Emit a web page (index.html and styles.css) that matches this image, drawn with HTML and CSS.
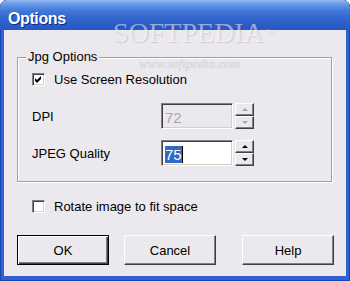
FILE: index.html
```html
<!DOCTYPE html>
<html lang="en">
<head>
    <meta charset="UTF-8">
    <title>Options</title>
    <link rel="stylesheet" href="styles.css">
</head>
<body>
    <div class="window">
        <div class="titlebar">Options</div>
        <div class="client">
            <fieldset class="group">
                <legend>Jpg Options</legend>
                <label class="check-row">
                    <span class="check">
                        <svg width="7" height="7" viewBox="0 0 7 7"><path d="M0 2 L2 4 L6 0 L6 3 L2 7 L0 5 Z" fill="#000"/></svg>
                    </span>
                    Use Screen Resolution
                </label>
                <div class="field-row dpi">
                    <span class="field-label">DPI</span>
                    <div class="edit disabled">72</div>
                    <div class="spin disabled">
                        <span class="spin-btn"><i class="arrow up"></i></span>
                        <span class="spin-btn"><i class="arrow down"></i></span>
                    </div>
                </div>
                <div class="field-row quality">
                    <span class="field-label">JPEG Quality</span>
                    <div class="edit"><span class="selected">75</span><span class="caret"></span></div>
                    <div class="spin">
                        <span class="spin-btn"><i class="arrow up"></i></span>
                        <span class="spin-btn"><i class="arrow down"></i></span>
                    </div>
                </div>
            </fieldset>

            <label class="check-row rotate">
                <span class="check"></span>
                Rotate image to fit space
            </label>

            <div class="buttons">
                <button class="btn default">OK</button>
                <button class="btn">Cancel</button>
                <button class="btn help">Help</button>
            </div>
        </div>

        <!-- watermark over the window -->
        <div class="watermark">SOFTPEDIA<span class="tm">™</span></div>
        <div class="watermark-url">www.softpedia.com</div>
    </div>
</body>
</html>
```

FILE: styles.css
```css
body {
    margin: 0;
    padding: 0;
    background-color: #ffffff;
    font-family: "Liberation Sans", Arial, sans-serif;
    font-size: 13px;
    color: #000;
}
.window {
    position: relative;
    width: 350px;
    height: 281px;
    box-sizing: border-box;
    padding: 0 4px 5px 4px;
    background-color: #2e62d4;
    border-radius: 7px 7px 0 0;
    box-shadow: inset 1px 0 0 #1a44b0, inset -1px 0 0 #1a44b0, inset 0 -1px 0 #1a44b0;
    overflow: hidden;
    display: flex;
    flex-direction: column;
}
.titlebar {
    height: 30px;
    box-sizing: border-box;
    margin: 0 -4px;
    padding: 5px 0 0 8px;
    line-height: 27px;
    font-size: 16px;
    font-weight: bold;
    letter-spacing: -0.4px;
    color: #fff;
    text-shadow: 1px 1px 0 #0c2a86;
    border-radius: 7px 7px 0 0;
    background: linear-gradient(to bottom, #9cc0f2 0, #7aa8ec 2px, #5b90e2 6px, #4178d8 11px, #3468d0 17px, #2c5dc8 24px, #2957c2 30px);
}
.client {
    flex: 1;
    background-color: #ebe9ed;
    padding: 19px 12px 0 13px;
}
.group {
    margin: 0 2px 0 0;
    padding: 6px 14px 15px 14px;
    border: 1px solid #a0a0a0;
    box-shadow: 1px 1px 0 #fff, inset 1px 1px 0 #fff;
}
.group legend {
    margin-left: -6px;
    padding: 0 2px;
    line-height: 16px;
    background-color: #ebe9ed;
}
.check-row {
    display: flex;
    align-items: center;
    height: 16px;
}
.check {
    width: 13px;
    height: 13px;
    box-sizing: border-box;
    margin-right: 9px;
    background-color: #fff;
    border: 1px solid;
    border-color: #808080 #fff #fff #808080;
    box-shadow: inset 1px 1px 0 #404040, inset -1px -1px 0 #d4d0c8;
    display: flex;
    align-items: center;
    justify-content: center;
}
.check svg {
    display: block;
}
.field-row {
    display: flex;
    align-items: center;
}
.field-row.dpi {
    margin-top: 16px;
}
.field-row.quality {
    margin-top: 11px;
}
.field-label {
    width: 129px;
}
.edit {
    width: 72px;
    height: 26px;
    box-sizing: border-box;
    border: 1px solid;
    border-color: #808080 #fff #fff #808080;
    box-shadow: inset 1px 1px 0 #404040, inset -1px -1px 0 #d4d0c8;
    background-color: #fff;
    padding: 2px 0 0 3px;
    display: flex;
    align-items: center;
    font-size: 15px;
}
.edit.disabled {
    background-color: #ebe9ed;
    color: #a8a8a8;
}
.selected {
    background-color: #316ac5;
    color: #fff;
    line-height: 17px;
}
.caret {
    width: 1px;
    height: 17px;
    background-color: #000;
}
.spin {
    margin-left: 2px;
    display: flex;
    flex-direction: column;
}
.spin-btn {
    width: 19px;
    height: 13px;
    box-sizing: border-box;
    background-color: #ebe9ed;
    border: 1px solid;
    border-color: #fff #404040 #404040 #fff;
    box-shadow: inset -1px -1px 0 #808080;
    display: flex;
    align-items: center;
    justify-content: center;
}
.arrow {
    width: 0;
    height: 0;
    border-left: 3px solid transparent;
    border-right: 3px solid transparent;
}
.arrow.up {
    border-bottom: 3px solid #000;
}
.arrow.down {
    border-top: 3px solid #000;
}
.spin.disabled .arrow.up {
    border-bottom-color: #a8a8a8;
}
.spin.disabled .arrow.down {
    border-top-color: #a8a8a8;
}
.check-row.rotate {
    margin: 16px 0 0 15px;
}
.buttons {
    display: flex;
    margin-top: 21px;
}
.btn {
    width: 92px;
    height: 30px;
    box-sizing: border-box;
    margin-right: 15px;
    font-family: "Liberation Sans", Arial, sans-serif;
    font-size: 13px;
    color: #000;
    background-color: #ebe9ed;
    border: 1px solid;
    border-color: #fff #404040 #404040 #fff;
    box-shadow: inset -1px -1px 0 #808080;
    padding: 0;
}
.btn.default {
    border-color: #000;
    box-shadow: inset 1px 1px 0 #fff, inset -1px -1px 0 #404040, inset -2px -2px 0 #808080;
}
.btn.help {
    margin: 0 0 0 auto;
}
.watermark {
    position: absolute;
    left: 113px;
    top: 19px;
    font-family: "Liberation Serif", "Times New Roman", serif;
    font-size: 28px;
    line-height: 28px;
    color: rgba(255, 255, 255, 0.5);
    text-shadow: 1px 1px 1px rgba(0, 0, 0, 0.12);
}
.watermark .tm {
    font-size: 8px;
    vertical-align: top;
    margin-left: 2px;
}
.watermark-url {
    position: absolute;
    left: 139px;
    top: 56px;
    font-family: "Liberation Serif", "Times New Roman", serif;
    font-style: italic;
    font-size: 13px;
    color: #dddbe0;
    text-shadow: 0 0 1px rgba(0, 0, 0, 0.12);
}
```
